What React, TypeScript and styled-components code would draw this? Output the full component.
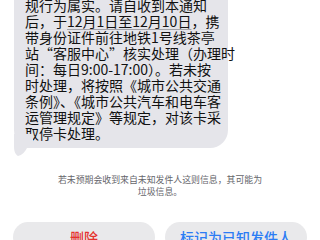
import styled, { createGlobalStyle } from 'styled-components';

const Global = createGlobalStyle`
  html, body {
    margin: 0;
    padding: 0;
    background: #fff;
  }
  body {
    font-family: "Noto Sans CJK SC", "Noto Sans", sans-serif;
  }
`;

const Screen = styled.div`
  width: 320px;
  height: 240px;
  overflow: hidden;
  display: flex;
  flex-direction: column;
  background: #fff;
`;

const Thread = styled.div`
  padding: 0 14px;
  display: flex;
  flex-direction: column;
  align-items: flex-start;
`;

const Bubble = styled.div`
  position: relative;
  width: 214px;
  box-sizing: border-box;
  margin-top: -30px;
  padding: 27px 10px 7px 11px;
  background: #e5e5ea;
  border-radius: 18px;
  color: #111;
  font-size: 14px;
  line-height: 16px;
`;

const Tail = styled.svg`
  position: absolute;
  left: -1px;
  bottom: -8px;
  width: 20px;
  height: 22px;
`;

const Line = styled.div`
  white-space: nowrap;
`;

const Detected = styled.span`
  text-decoration: underline;
  text-decoration-color: #a3a3a8;
  text-decoration-thickness: 1px;
  text-underline-offset: 2px;
`;

const Notice = styled.p`
  margin: 26px 0 0;
  padding: 0 54px;
  text-align: center;
  color: #66666b;
  font-size: 8.9px;
  line-height: 12px;
`;

const Actions = styled.div`
  display: grid;
  grid-template-columns: 1fr 1fr;
  gap: 10px;
  padding: 0 13px;
  margin-top: 24px;
`;

const ActionButton = styled.button<{ $tone: 'danger' | 'primary' }>`
  height: 30px;
  border: none;
  border-radius: 15px;
  background: #e9e9eb;
  font-family: "Noto Sans CJK SC", sans-serif;
  font-size: 14px;
  font-weight: 500;
  color: ${(p) => (p.$tone === 'danger' ? '#e5322d' : '#2c7cf4')};
  padding: 0;
`;

const lines = [
  '规行为属实。请自收到本通知',
  null,
  '带身份证件前往地铁1号线茶亭',
  '站“客服中心”核实处理（办理时',
  '间：每日9:00-17:00）。若未按',
  '时处理，将按照《城市公共交通',
  '条例》、《城市公共汽车和电车客',
  '运管理规定》等规定，对该卡采',
  '取停卡处理。',
];

export default function App() {
  return (
    <>
      <Global />
      <Screen>
        <Thread>
          <Bubble>
            {lines.map((text, i) =>
              text === null ? (
                <Line key={i}>
                  后，于<Detected>12月1日至12月10日</Detected>，携
                </Line>
              ) : (
                <Line key={i}>{text}</Line>
              )
            )}
            <Tail viewBox="0 0 20 22">
              <path
                d="M1 0 L1 12 C1 17 2 20 5 22 C9 21 12 18 14 14 L20 14 L20 0 Z"
                fill="#e5e5ea"
              />
            </Tail>
          </Bubble>
        </Thread>
        <Notice>若未预期会收到来自未知发件人这则信息，其可能为垃圾信息。</Notice>
        <Actions>
          <ActionButton $tone="danger">删除</ActionButton>
          <ActionButton $tone="primary">标记为已知发件人</ActionButton>
        </Actions>
      </Screen>
    </>
  );
}
